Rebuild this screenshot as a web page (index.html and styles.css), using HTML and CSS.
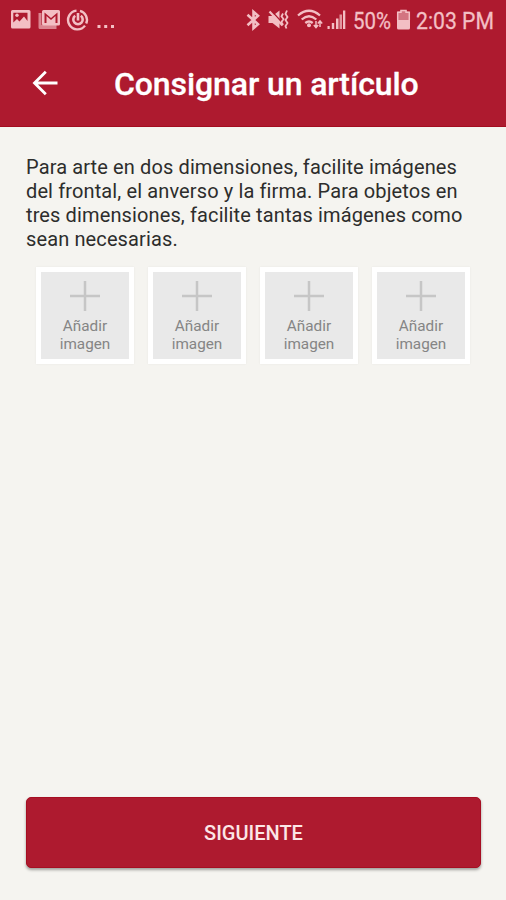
FILE: index.html
```html
<!DOCTYPE html>
<html lang="es">
<head>
<meta charset="utf-8">
<title>Consignar un artículo</title>
<link rel="stylesheet" href="styles.css">
</head>
<body>
<div class="app">
  <div class="status">
    <svg class="notifications" width="120" height="40" viewBox="0 0 120 40">
      <path fill-rule="evenodd" d="M12.500 10h16.500q1.500 0 1.500 1.500v15.500q0 1.500-1.500 1.500h-16.500q-1.500 0-1.500-1.500v-15.500q0-1.500 1.500-1.500zM13.300 12.800h14.200v8.200l-3.500-4.500-4.500 5-2.500-2.500-3.700 3.500z"/>
      <circle cx="17" cy="15.200" r="1.700"/>
      <path opacity=".65" d="M38.500 13h3v12h15v4h-16.500q-1.500 0-1.500-1.500z"/>
      <path fill-rule="evenodd" d="M43.500 10h15q1.500 0 1.500 1.500v12.500q0 1.500-1.500 1.500h-15q-1.500 0-1.500-1.500v-12.500q0-1.500 1.500-1.500zM44.500 12.500v10.500h2v-7l4.500 4 4.500-4v7h2v-10.500l-6.500 5.500z"/>
      <g fill="none" stroke="currentColor">
        <path stroke-width="2.400" d="M76.500 10.600a9.400 9.400 0 1 0 8.500 15M80 10.800a9.400 9.400 0 0 1 6.200 12.700"/>
        <path stroke-width="2.600" d="M75.200 15.800a4.700 4.700 0 1 0 5.600 0M78 13v7.500"/>
      </g>
      <path d="M97.500 25h3v3h-3zM104.200 25h3v3h-3zM111 25h3v3h-3z"/>
    </svg>
    <svg class="system" width="266" height="40" viewBox="240 0 266 40">
      <path fill="none" stroke="currentColor" stroke-width="2.600" d="M247.500 14.800l10.500 9.400-4.500 4v-16.400l4.500 4-10.500 9.400"/>
      <path d="M268.500 16h4l7-5.500v18l-7-5.500h-4z"/>
      <g fill="none" stroke="currentColor">
        <path class="gap" stroke-width="1.500" d="M271 10.500l12 13"/>
        <path stroke-width="2.200" d="M269.500 11.500l13 14"/>
        <path stroke-width="1.800" d="M283 13.500l-1.500 3 2 2.500-2 3 1.500 3M287 10.500l-1.500 3.500 2 3-2 3 2 3-2 3 1 2.500"/>
        <path stroke-width="2.300" d="M298 15.500q11-9.500 22 0M301.700 19.500q7.300-6.500 14.600 0M305.300 23q3.700-3 7.400 0"/>
        <path stroke-width="1.500" d="M316 21v6M313.800 25l2.200 2.500 2.200-2.500M320 27v-6M317.800 23.500l2.200-2.500 2.200 2.500"/>
      </g>
      <circle cx="309" cy="25.200" r="2"/>
      <path d="M327.500 26h2.200v3h-2.200zM331.800 23h2.400v6h-2.400zM336 18.500h2.500v10.500h-2.500zM343 10.500h2.300v18.500h-2.300z"/>
      <path opacity=".75" d="M339.500 14.500h2.500v14.500h-2.500z"/>
      <text class="status-text" x="353" y="28.500" textLength="38" lengthAdjust="spacingAndGlyphs">50%</text>
      <path opacity=".55" d="M400.500 10h6v1.500h2q1.500 0 1.500 1.500v7h-13v-7q0-1.500 1.500-1.500h2z"/>
      <path d="M397 20h13v8q0 1.500-1.500 1.500h-10q-1.500 0-1.500-1.500z"/>
      <path fill="none" stroke="currentColor" stroke-width="1.500" d="M397.700 20v-7.800h3.300v-1.700h5v1.700h3.300v7.800"/>
      <text class="status-text" x="416" y="28.500" textLength="78" lengthAdjust="spacingAndGlyphs">2:03 PM</text>
    </svg>
  </div>
  <header class="header">
    <svg class="back" width="28" height="28" viewBox="0 0 28 28"><path d="M26.500 14h-23M14.800 2.800l-11.300 11.200 11.300 11.200"/></svg>
    <h1 class="title">Consignar un artículo</h1>
  </header>
  <main class="content">
    <p class="intro">Para arte en dos dimensiones, facilite imágenes<br>del frontal, el anverso y la firma. Para objetos en<br>tres dimensiones, facilite tantas imágenes como<br>sean necesarias.</p>
    <div class="images">
      <div class="tile"><svg class="plus" width="30" height="30"><path d="M15 0v30M0 15h30"/></svg><span>Añadir<br>imagen</span></div>
      <div class="tile"><svg class="plus" width="30" height="30"><path d="M15 0v30M0 15h30"/></svg><span>Añadir<br>imagen</span></div>
      <div class="tile"><svg class="plus" width="30" height="30"><path d="M15 0v30M0 15h30"/></svg><span>Añadir<br>imagen</span></div>
      <div class="tile"><svg class="plus" width="30" height="30"><path d="M15 0v30M0 15h30"/></svg><span>Añadir<br>imagen</span></div>
    </div>
  </main>
  <button class="next">SIGUIENTE</button>
</div>
</body>
</html>
```
FILE: styles.css
```css
* { box-sizing: border-box; }
body { margin: 0; background: #f5f4f0; font-family: Roboto, sans-serif; }
.app { display: flex; flex-direction: column; height: 900px; overflow: hidden; }
.status {
  display: flex;
  justify-content: space-between;
  height: 40px;
  background: #ae1a2f;
  color: #f3bfc4;
}
.status svg { display: block; fill: currentColor; }
.status-text { font-size: 24px; stroke: currentColor; stroke-width: .3; }
.gap { stroke: #ae1a2f; }
.header {
  display: flex;
  align-items: center;
  height: 87px;
  padding: 0 0 1px 31px;
  background: #ae1a2f;
  border-bottom: 1px solid #a30d20;
}
.back { fill: none; stroke: #fff; stroke-width: 2.800; }
.title {
  margin: 2px 0 0 55px;
  color: #fff;
  font-size: 32px;
  font-weight: 500;
  letter-spacing: -.1px;
  line-height: 40px;
  white-space: nowrap;
  -webkit-text-stroke: .3px #fff;
}
.content { flex: 1; padding: 28px 26px 0; }
.intro {
  margin: 0;
  color: #2d2d2c;
  font-size: 20px;
  font-variant-ligatures: none;
  letter-spacing: .12px;
  line-height: 24px;
  white-space: nowrap;
}
.images { display: flex; gap: 14px; margin: 16px 0 0 10px; }
.tile {
  display: flex;
  flex: none;
  flex-direction: column;
  align-items: center;
  width: 98px;
  height: 97px;
  padding-top: 9px;
  border: 5px solid #fff;
  background: #e9e9e9;
  box-shadow: 0 0 2px rgba(0, 0, 0, .06);
  color: #858585;
  font-size: 15.300px;
  line-height: 17.500px;
  text-align: center;
}
.plus { display: block; margin-bottom: 7px; fill: none; stroke: #c6c6c6; stroke-width: 2.500; }
.next {
  height: 71px;
  margin: 0 25px 32px 26px;
  padding: 0;
  border: 1px solid #a60e22;
  border-radius: 5px;
  background: #ae1a2f;
  box-shadow: 0 2px 3px rgba(0, 0, 0, .35);
  color: #fce6e7;
  font: 500 20px Roboto, sans-serif;
}
```
